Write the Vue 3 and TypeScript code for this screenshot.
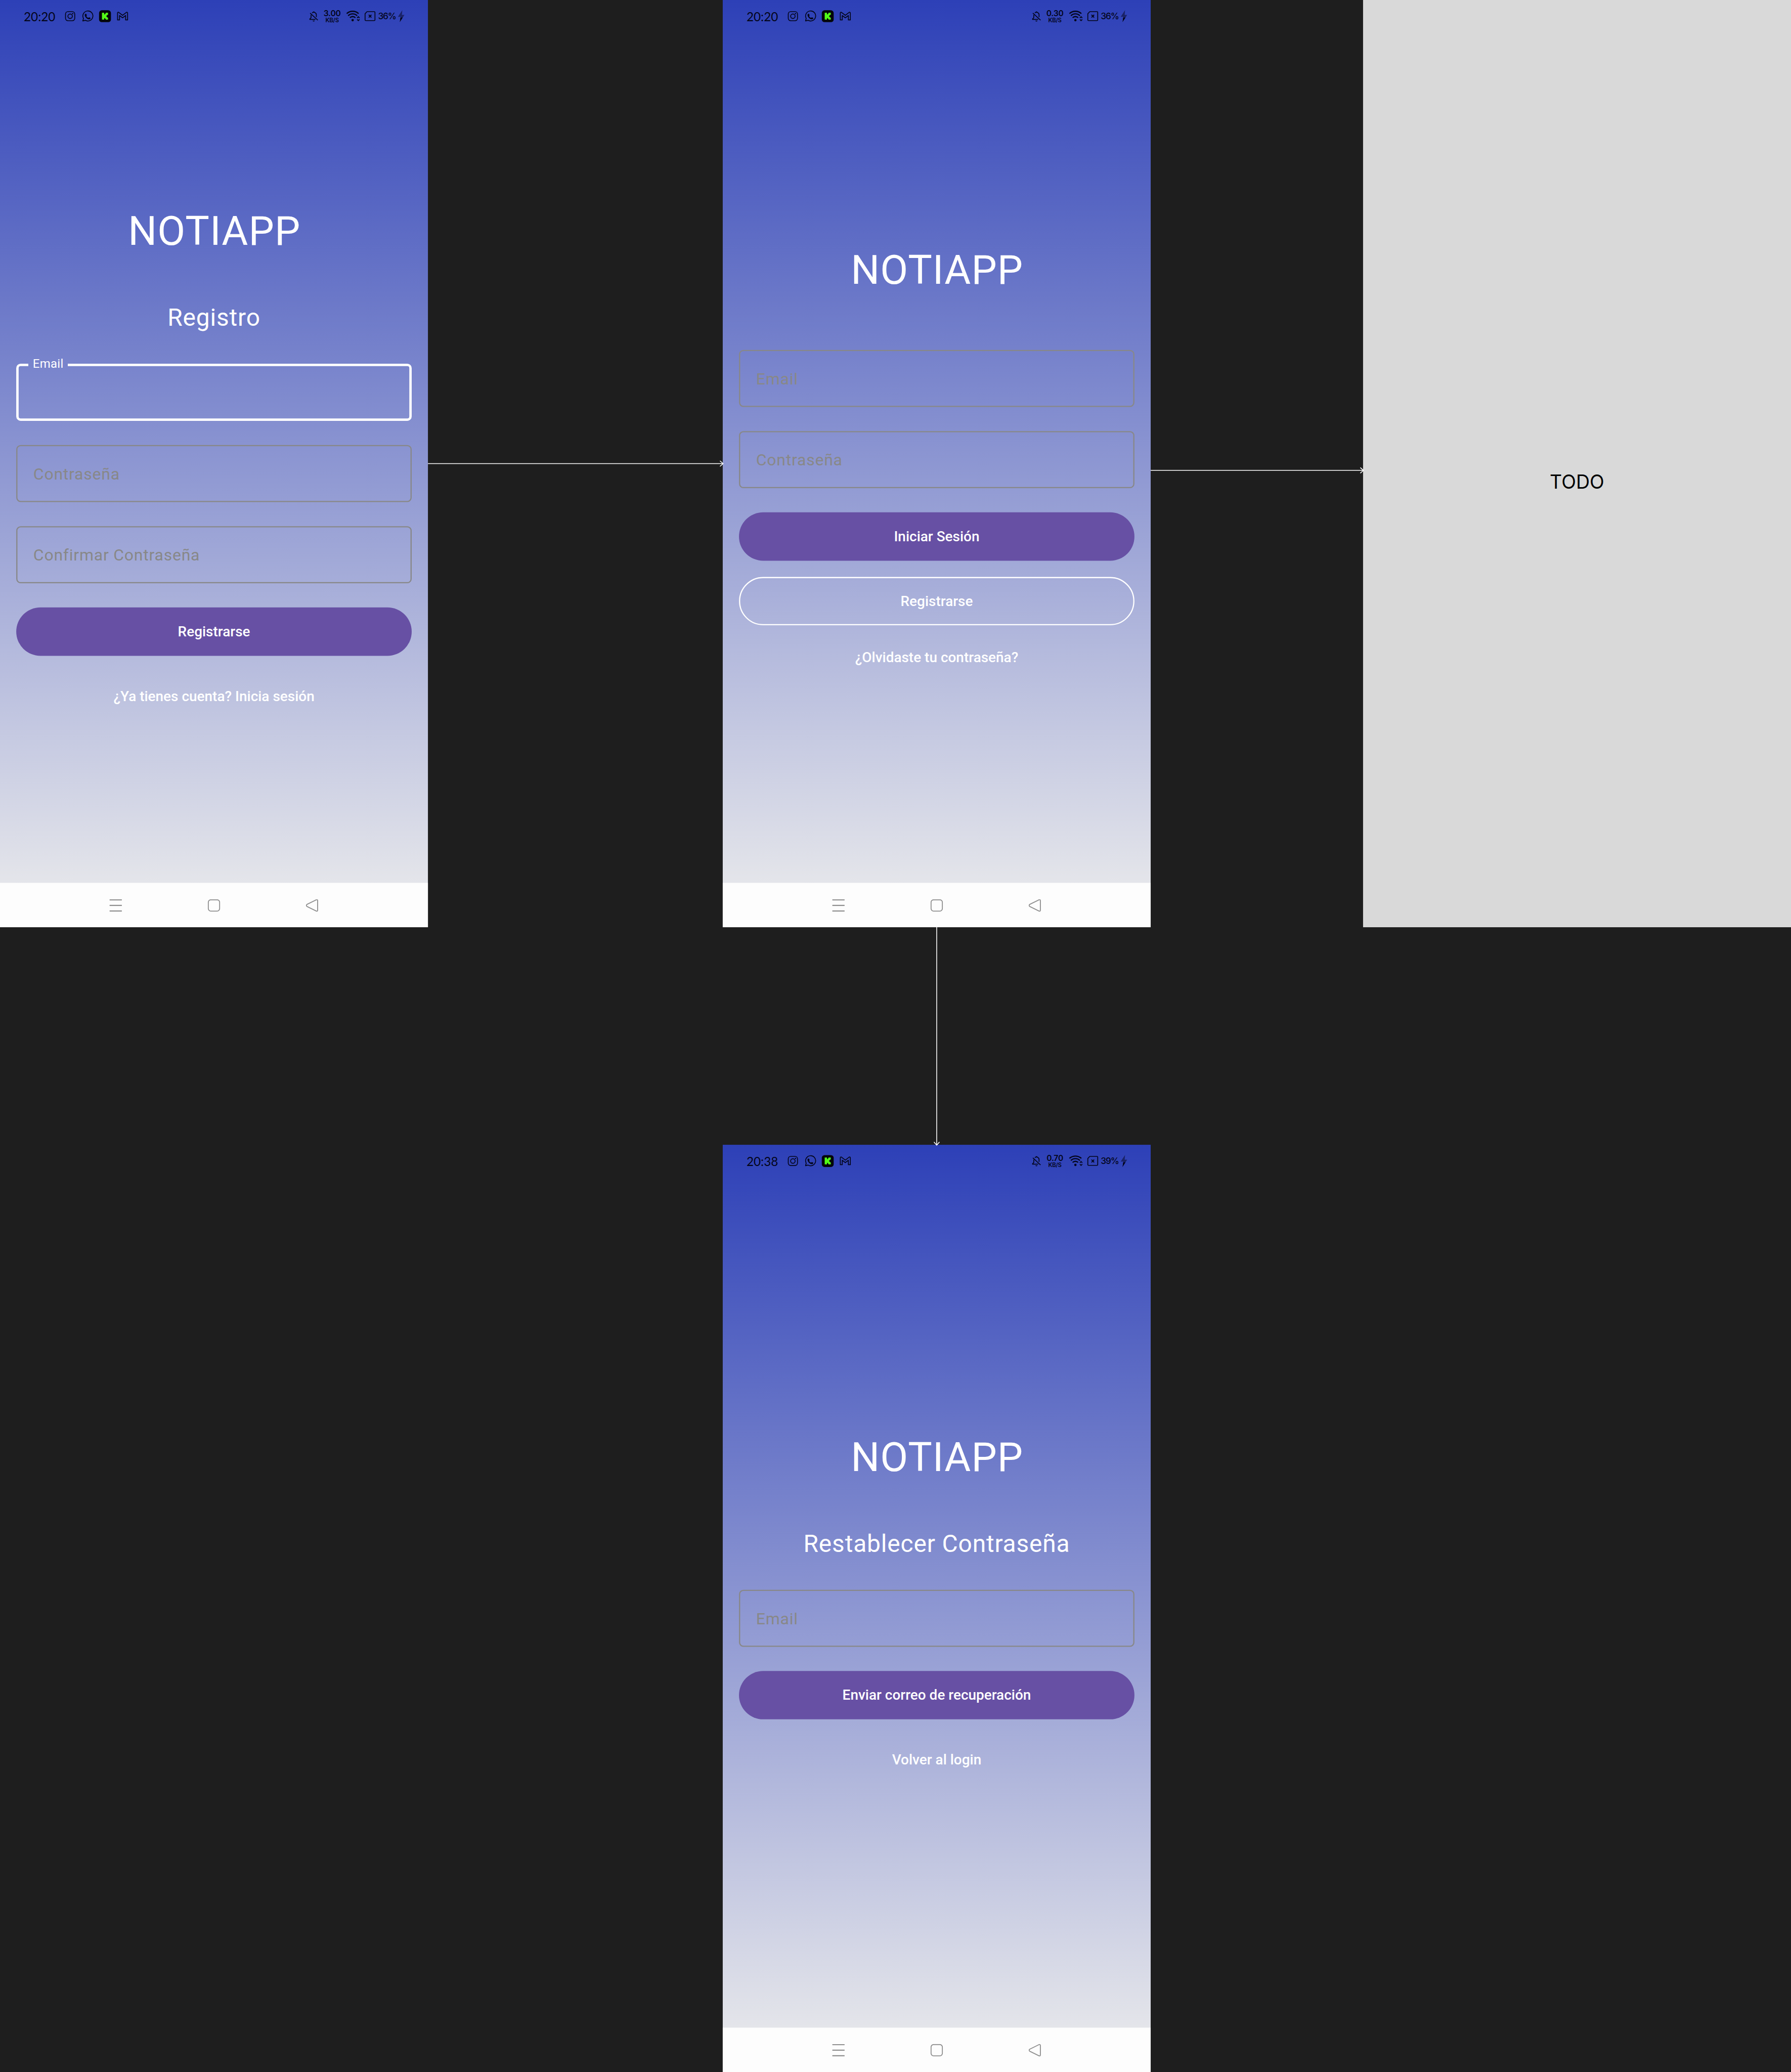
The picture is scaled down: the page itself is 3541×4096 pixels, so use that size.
<script setup lang="ts">
type Item =
  | { kind: 'brand' | 'title' | 'field' | 'focused' | 'filled' | 'outlined' | 'link'; text: string }

interface Screen {
  id: string
  time: string
  speed: string
  battery: string
  items: Item[]
}

const screens: Screen[] = [
  {
    id: 'register',
    time: '20:20',
    speed: '3.00',
    battery: '36%',
    items: [
      { kind: 'brand', text: 'NOTIAPP' },
      { kind: 'title', text: 'Registro' },
      { kind: 'focused', text: 'Email' },
      { kind: 'field', text: 'Contraseña' },
      { kind: 'field', text: 'Confirmar Contraseña' },
      { kind: 'filled', text: 'Registrarse' },
      { kind: 'link', text: '¿Ya tienes cuenta? Inicia sesión' },
    ],
  },
  {
    id: 'login',
    time: '20:20',
    speed: '0.30',
    battery: '36%',
    items: [
      { kind: 'brand', text: 'NOTIAPP' },
      { kind: 'field', text: 'Email' },
      { kind: 'field', text: 'Contraseña' },
      { kind: 'filled', text: 'Iniciar Sesión' },
      { kind: 'outlined', text: 'Registrarse' },
      { kind: 'link', text: '¿Olvidaste tu contraseña?' },
    ],
  },
  {
    id: 'reset',
    time: '20:38',
    speed: '0.70',
    battery: '39%',
    items: [
      { kind: 'brand', text: 'NOTIAPP' },
      { kind: 'title', text: 'Restablecer Contraseña' },
      { kind: 'field', text: 'Email' },
      { kind: 'filled', text: 'Enviar correo de recuperación' },
      { kind: 'link', text: 'Volver al login' },
    ],
  },
]
</script>

<template>
  <div class="viewport">
    <main class="board">
      <section v-for="s in screens" :key="s.id" class="phone" :class="s.id">
        <header class="status">
          <span class="time">{{ s.time }}</span>
          <svg class="ic" width="40" height="34" viewBox="480 72 120 102" fill="none" stroke="#03051a" stroke-width="6.500">
            <rect x="496" y="88" width="70" height="69" rx="19" />
            <circle cx="531" cy="123" r="17" />
            <circle cx="550.5" cy="103.500" r="5" fill="#03051a" stroke="none" />
          </svg>
          <svg class="ic" width="45" height="34" viewBox="600 72 135 102" fill="none" stroke="#03051a" stroke-width="6.500" stroke-linejoin="round">
            <path d="M627 158.500 632 139A38 38 0 1 1 646 153.500Z" />
            <path d="M643 108C645 103 652 103 654 107L657.500 115C658 118 654 120 654 122.500C657 129 662 133 668 135C671 135 673 130 676 131L684 135C688 138 684 144 680 145C670 149 657 142 650 133C643 124 640 115 643 108Z" fill="#03051a" stroke="none" />
          </svg>
          <svg class="ic" width="41.667" height="34" viewBox="735 72 125 102">
            <rect x="750" y="78" width="90" height="90" rx="21" fill="#04060a" />
            <path d="M772 97H789V109H795V103H800V97H818V112H812V117H806V128H812V133H818V148H800V142H795V137H789V148H772Z" fill="#53fc18" />
          </svg>
          <svg class="ic" width="40" height="34" viewBox="860 72 120 102" fill="none" stroke="#03051a" stroke-width="6.500" stroke-linejoin="round">
            <path d="M889 151V99C889 92 895 91 900 95L927 116 954 95C959 91 965 92 965 99V151H950V117L927 135 904 117V151Z" />
          </svg>
          <span class="spacer"></span>
          <svg class="ic" width="33.333" height="34" viewBox="110 72 100 102" fill="none" stroke="#03051a" stroke-width="6.500" stroke-linejoin="round">
            <path d="M145 98A19 19 0 0 1 177 112V129M130 99 188 153" />
            <path d="M137 112V134L128 143V147H170" />
            <path d="M153 92V88H162V92Z" fill="#03051a" stroke-width="2" />
            <path d="M149 156H165A8 7 0 0 1 149 156Z" fill="#03051a" stroke="none" />
          </svg>
          <span class="speed"><b>{{ s.speed }}</b><i>KB/S</i></span>
          <svg class="ic" width="46.667" height="34" viewBox="390 72 140 102" fill="none" stroke="#03051a" stroke-width="9">
            <path d="M405 103A66 66 0 0 1 495 103" />
            <path d="M416 119A48 48 0 0 1 484 119" />
            <path d="M429 134A30 30 0 0 1 471 134" />
            <circle cx="450" cy="152.500" r="9" fill="#03051a" stroke="none" />
            <path d="M484 136 493 127 502 136M484 147 493 156 502 147" stroke-width="7" />
          </svg>
          <svg class="ic" width="36.667" height="34" viewBox="530 72 110 102" fill="none" stroke="#03051a" stroke-width="6.500">
            <path d="M561 88H615Q621 88 621 94V150Q621 156 615 156H552Q546 156 546 150V104Z" stroke-linejoin="round" />
            <path d="M574 112 594 133M594 112 574 133" stroke-width="7" />
          </svg>
          <span class="battery">{{ s.battery }}</span>
          <svg class="ic" width="21.667" height="34" viewBox="785 72 65 102">
            <path d="M828 77 795 127H815L809 167 844 113H825Z" fill="#1a2368" />
            <path d="M814 133H831L809 167Z" fill="#03051a" />
          </svg>
        </header>

        <div class="content">
          <template v-for="(it, i) in s.items" :key="i">
            <fieldset v-if="it.kind === 'focused'" class="focused">
              <legend>{{ it.text }}</legend>
            </fieldset>
            <div v-else :class="it.kind">{{ it.text }}</div>
          </template>
        </div>

        <footer class="nav">
          <svg width="32" height="32" viewBox="0 0 32 32" fill="none" stroke="#8f8f8f" stroke-width="2.800">
            <path d="M.5 2H31.500M.5 16H31.500M.5 30H31.500" />
          </svg>
          <svg width="32" height="32" viewBox="0 0 32 32" fill="none" stroke="#8f8f8f" stroke-width="2.400">
            <rect x="1.700" y="1.700" width="28.600" height="28.600" rx="6.500" />
          </svg>
          <svg width="32" height="32" viewBox="0 0 32 32" fill="none" stroke="#8f8f8f" stroke-width="2.400" stroke-linejoin="round">
            <path d="M2.600 13.500 26.500 1.700Q29.600.9 29.600 4V28Q29.600 31.100 26.500 30.300L2.600 18.500Q-.2 16 2.600 13.500Z" />
          </svg>
        </footer>
      </section>

      <section class="todo">TODO</section>

      <svg class="links" width="4520" height="5229" viewBox="0 0 4520 5229" fill="none" stroke="#fff" stroke-width="2">
        <path d="M1080 1170H1825M1817 1163 1825 1170 1817 1177" />
        <path d="M2904 1187H3441M3433 1180 3441 1187 3433 1194" />
        <path d="M2364 2340V2890M2357 2882 2364 2890 2371 2882" />
      </svg>
    </main>
  </div>
</template>

<style>
body {
  margin: 0;
  background: #1e1e1e;
}
</style>

<style scoped>
.viewport {
  width: 3541px;
  height: 4096px;
  overflow: hidden;
}
.board {
  position: relative;
  width: 4520px;
  height: 5229px;
  background: #1e1e1e;
  transform: scale(0.78341, 0.78333);
  transform-origin: 0 0;
  font-family: Roboto, sans-serif;
}
.phone {
  position: absolute;
  display: flex;
  flex-direction: column;
  width: 1080px;
  height: 2340px;
  color: #fff;
  background: linear-gradient(#2d40b7 0, #e4e5ea 2228px);
}
.register {
  left: 0;
  top: 0;
}
.login {
  left: 1824px;
  top: 0;
}
.reset {
  left: 1824px;
  top: 2889px;
}
.status {
  display: flex;
  align-items: flex-start;
  box-sizing: border-box;
  height: 82px;
  padding: 24px 57px 0 60px;
  color: #03051a;
}
.ic {
  flex: none;
  display: block;
}
.time {
  width: 100px;
  font: 400 31px/34px Lato, sans-serif;
}
.spacer {
  flex: 1;
}
.speed {
  display: flex;
  flex-direction: column;
  align-items: center;
  width: 57px;
  padding-right: 3px;
}
.speed b {
  font: 600 20px/20px Inter, sans-serif;
  letter-spacing: -0.300px;
}
.speed i {
  font: 600 14.500px/14px Inter, sans-serif;
  letter-spacing: -0.300px;
}
.battery {
  width: 48.300px;
  padding-left: 1px;
  box-sizing: border-box;
  white-space: nowrap;
  font: 500 22px/32px Inter, sans-serif;
  letter-spacing: -1.500px;
}
.content {
  flex: 1;
  display: flex;
  flex-direction: column;
  padding: 0 41px;
}
.register .content {
  padding-top: 441px;
}
.login .content {
  padding-top: 538.500px;
}
.reset .content {
  padding-top: 645.500px;
}
.brand {
  height: 120px;
  padding-left: 2px;
  text-align: center;
  font-size: 102px;
  line-height: 120px;
  letter-spacing: 1.275px;
}
.title {
  height: 72px;
  margin: 122px 0 81px;
  text-align: center;
  font-size: 61.200px;
  line-height: 72px;
  letter-spacing: 1.050px;
}
.login .brand {
  margin-bottom: 142px;
}
.field {
  box-sizing: border-box;
  height: 144px;
  margin-bottom: 61px;
  padding-left: 40px;
  border: 3px solid #888;
  border-radius: 11px;
  color: #888;
  font-size: 40.800px;
  line-height: 140px;
  letter-spacing: 1px;
}
.focused {
  box-sizing: border-box;
  height: 144px;
  min-width: 0;
  margin: 0 0 61px;
  padding: 0;
  border: 6px solid #fff;
  border-radius: 11px;
}
.focused legend {
  box-sizing: border-box;
  width: 99px;
  height: 6px;
  margin-left: 25px;
  padding: 0 0 0 10.600px;
  font-size: 30.600px;
  line-height: 0;
  letter-spacing: 0.400px;
  white-space: nowrap;
}
.filled,
.outlined {
  box-sizing: border-box;
  height: 122px;
  border-radius: 61px;
  text-align: center;
  font-size: 35.700px;
  font-weight: 500;
  line-height: 122px;
}
.filled {
  background: #6750a4;
}
.outlined {
  margin-top: 41px;
  border: 3px solid #fff;
  line-height: 116px;
}
.link {
  margin-top: 78px;
  text-align: center;
  font-size: 35.700px;
  font-weight: 500;
  line-height: 48px;
}
.login .link {
  margin-top: 57px;
}
.nav {
  display: flex;
  justify-content: space-between;
  align-items: flex-start;
  box-sizing: border-box;
  height: 112px;
  padding: 40.500px 276px 0 275.500px;
  background: #fdfdfd;
}
.todo {
  position: absolute;
  left: 3440px;
  top: 0;
  box-sizing: border-box;
  width: 1080px;
  height: 2340px;
  padding-top: 1187px;
  background: #d9d9d9;
  color: #000;
  text-align: center;
  font: 400 48px/58px Inter, sans-serif;
}
.links {
  position: absolute;
  left: 0;
  top: 0;
}
</style>
